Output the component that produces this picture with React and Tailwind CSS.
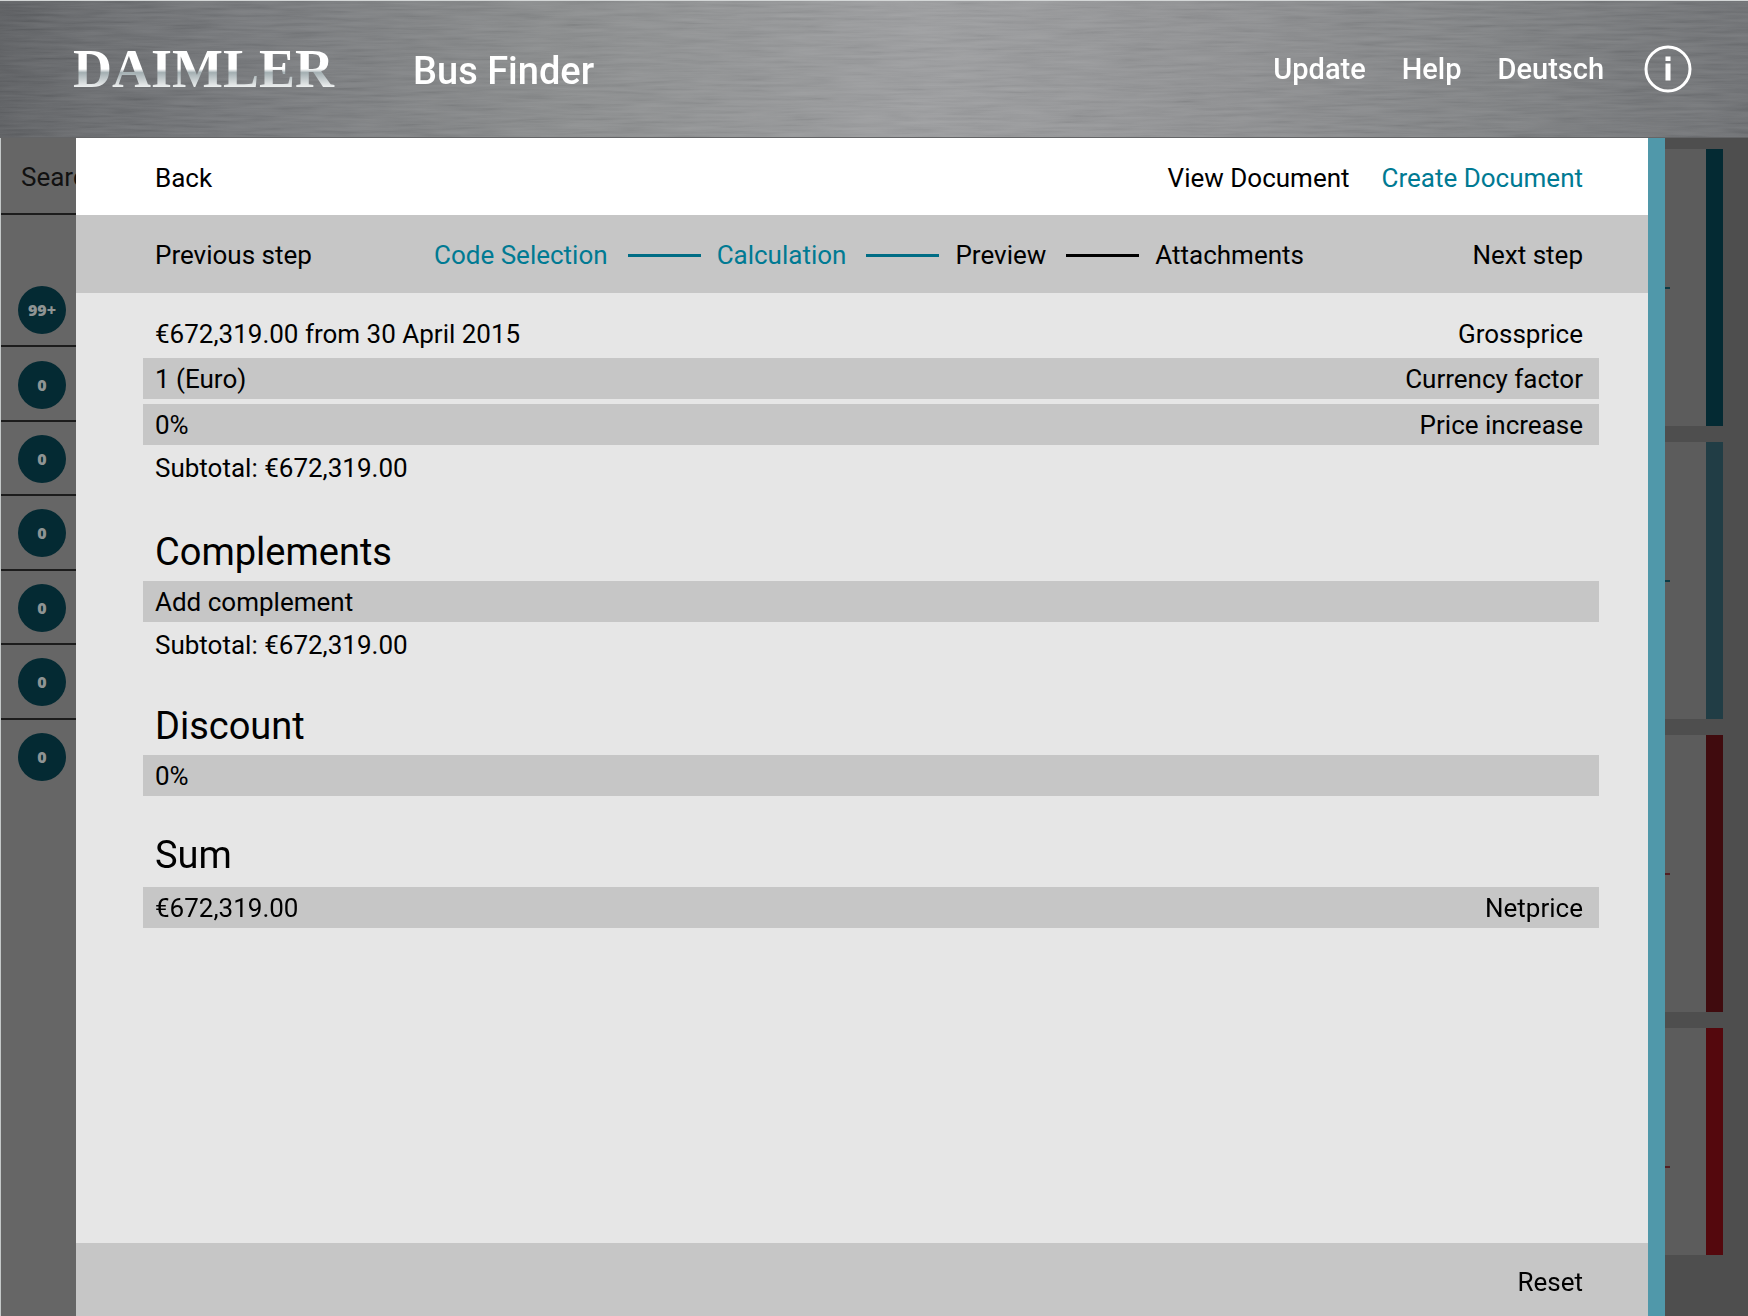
import { useState } from 'react'

const counters = ['99+', '0', '0', '0', '0', '0', '0']

const cards = [
  { id: 'a', bar: 'bg-[#042a33]', tick: 'bg-[#0d3a44]', size: 'h-[277px]' },
  { id: 'b', bar: 'bg-[#213d45]', tick: 'bg-[#0d3a44]', size: 'h-[277px]' },
  { id: 'c', bar: 'bg-[#400b0e]', tick: 'bg-[#521f24]', size: 'h-[277px]' },
  { id: 'd', bar: 'bg-[#54080d]', tick: 'bg-[#521f24]', size: 'flex-1' },
]

const steps = [
  { label: 'Code Selection', color: 'text-[#007a93]', line: 'bg-[#006d85]' },
  { label: 'Calculation', color: 'text-[#007a93]', line: 'bg-[#006d85]' },
  { label: 'Preview', color: 'text-black', line: 'bg-black' },
  { label: 'Attachments', color: 'text-black' },
]

const bar = 'flex h-[41px] items-center justify-between bg-[#c6c6c6] pl-3 pr-4'
const heading = 'pl-3 text-[38px] leading-[48px]'

function BrushedMetal() {
  return (
    <svg className="absolute inset-0 h-full w-full" aria-hidden="true">
      <defs>
        <linearGradient id="steel" x1="0" y1="0" x2="1" y2="0">
          <stop offset="0" stopColor="#5a5c5f" />
          <stop offset="0.05" stopColor="#66686b" />
          <stop offset="0.14" stopColor="#727477" />
          <stop offset="0.32" stopColor="#868889" />
          <stop offset="0.53" stopColor="#98999b" />
          <stop offset="0.7" stopColor="#8b8c8e" />
          <stop offset="0.85" stopColor="#7c7e80" />
          <stop offset="1" stopColor="#6b6d70" />
        </linearGradient>
        <filter id="grain" x="0" y="0" width="100%" height="100%">
          <feTurbulence type="fractalNoise" baseFrequency="0.018 0.3" numOctaves="3" seed="4" />
          <feColorMatrix values="1 0 0 0 0  1 0 0 0 0  1 0 0 0 0  0 0 0 0 1" />
        </filter>
      </defs>
      <rect width="100%" height="100%" fill="url(#steel)" />
      <rect className="mix-blend-soft-light" width="100%" height="100%" filter="url(#grain)" opacity="0.3" />
    </svg>
  )
}

function Header() {
  return (
    <header className="relative flex h-[138px] shrink-0 items-center justify-between border-t border-b border-t-[#d3d6d6] border-b-[#646567] pl-[73px] pr-14 text-white">
      <BrushedMetal />
      <div className="relative flex items-center gap-12">
        <span className="w-[292px] bg-linear-to-b from-white from-50% via-[#a3afb2] via-56% to-[#eef0f0] to-80% bg-clip-text font-['Liberation_Serif',serif] text-[54px] font-bold leading-[60px] text-transparent">
          DAIMLER
        </span>
        <h1 className="pt-1 text-[38px] font-medium leading-[48px]">Bus Finder</h1>
      </div>
      <nav className="relative flex items-center gap-9 text-[29px] font-medium leading-9">
        <a href="#update">Update</a>
        <a href="#help">Help</a>
        <a href="#deutsch">Deutsch</a>
        <button type="button" aria-label="Info" className="ml-1">
          <svg width="48" height="48" viewBox="0 0 48 48" fill="none">
            <circle cx="24" cy="24" r="22" stroke="#fff" strokeWidth="3" />
            <path d="M21.5 11.5h5v4.5h-5zM21.5 18.5h5v17h-5z" fill="#fff" />
          </svg>
        </button>
      </nav>
    </header>
  )
}

function Sidebar() {
  return (
    <aside className="w-[76px] shrink-0 overflow-hidden border-l border-[#c4c8c8] bg-[#666]">
      <div className="flex h-[77px] items-center border-b-2 border-[#1c1c1c] pt-1 pl-5 text-[26px] text-[#111]">Search</div>
      <ul className="mt-[58px] grid h-[521px] grid-rows-7">
        {counters.map((count, i) => (
          <li key={i} className="flex items-center border-b-2 border-[#1c1c1c] pt-0.5 pl-[17px] last:border-transparent">
            <span className="flex size-12 items-center justify-center rounded-full bg-[#042a33] font-['Open_Sans',sans-serif] text-[16px] font-extrabold text-[#8f9494]">
              {count}
            </span>
          </li>
        ))}
      </ul>
    </aside>
  )
}

function Results() {
  return (
    <aside className="flex w-[83px] shrink-0 flex-col gap-4 bg-[#4e4e4e] pt-[11px] pr-[25px] pb-[61px]">
      {cards.map((card) => (
        <div key={card.id} className={`flex justify-between bg-[#5c5c5c] ${card.size}`}>
          <div className="pt-[138px]">
            <div className={`h-0.5 w-[5px] ${card.tick}`} />
          </div>
          <div className={`w-[17px] ${card.bar}`} />
        </div>
      ))}
    </aside>
  )
}

function Calculation() {
  const [factor, setFactor] = useState('1')
  const [increase, setIncrease] = useState('0%')
  const [discount, setDiscount] = useState('0%')

  return (
    <div className="flex-1 bg-[#e6e6e6] pt-6 pr-[49px] pl-[67px]">
      <div className="flex justify-between pr-4 pl-3">
        <span>€672,319.00 from 30 April 2015</span>
        <span>Grossprice</span>
      </div>
      <div className="mt-[7px] flex flex-col gap-[5px]">
        <div className={bar}>
          <select id="factor" className="flex-1 appearance-none outline-none" value={factor} onChange={(e) => setFactor(e.target.value)}>
            <option value="1">1 (Euro)</option>
          </select>
          <label htmlFor="factor">Currency factor</label>
        </div>
        <div className={bar}>
          <input id="increase" className="flex-1 outline-none" value={increase} onChange={(e) => setIncrease(e.target.value)} />
          <label htmlFor="increase">Price increase</label>
        </div>
      </div>
      <p className="pt-1.5 pl-3">Subtotal: €672,319.00</p>

      <h2 className={`mt-[43px] mb-[5px] ${heading}`}>Complements</h2>
      <button type="button" className={`w-full ${bar}`}>Add complement</button>
      <p className="pt-1.5 pl-3">Subtotal: €672,319.00</p>

      <h2 className={`mt-10 mb-[5px] ${heading}`}>
        <label htmlFor="discount">Discount</label>
      </h2>
      <div className={bar}>
        <input id="discount" className="flex-1 outline-none" value={discount} onChange={(e) => setDiscount(e.target.value)} />
      </div>

      <h2 className={`mt-[35px] mb-2 ${heading}`}>Sum</h2>
      <div className={bar}>
        <span>€672,319.00</span>
        <span>Netprice</span>
      </div>
    </div>
  )
}

export default function App() {
  return (
    <div className="flex min-h-screen flex-col font-['Roboto',sans-serif]">
      <Header />
      <div className="flex flex-1">
        <Sidebar />
        <main className="flex min-w-0 flex-1 flex-col border-r-[17px] border-[#5098aa] bg-white text-[26px] leading-[34px] text-black">
          <div className="flex h-[77px] items-center justify-between pt-0.5 pr-[65px] pl-[79px]">
            <button type="button">Back</button>
            <div className="flex gap-8">
              <button type="button">View Document</button>
              <button type="button" className="text-[#007a93]">Create Document</button>
            </div>
          </div>
          <div className="grid h-[78px] grid-cols-[1fr_auto_1fr] items-center bg-[#c6c6c6] pt-0.5 pr-[65px] pl-[79px]">
            <button type="button" className="justify-self-start">Previous step</button>
            <ol className="flex items-center">
              {steps.map((step) => (
                <li key={step.label} className={`flex items-center ${step.color}`}>
                  {step.label}
                  {step.line && <span className={`mr-4 ml-5 h-[3px] w-[73px] ${step.line}`} />}
                </li>
              ))}
            </ol>
            <button type="button" className="justify-self-end">Next step</button>
          </div>
          <Calculation />
          <div className="flex h-[73px] items-center justify-end bg-[#c6c6c6] pt-1 pr-[65px]">
            <button type="button">Reset</button>
          </div>
        </main>
        <Results />
      </div>
    </div>
  )
}
